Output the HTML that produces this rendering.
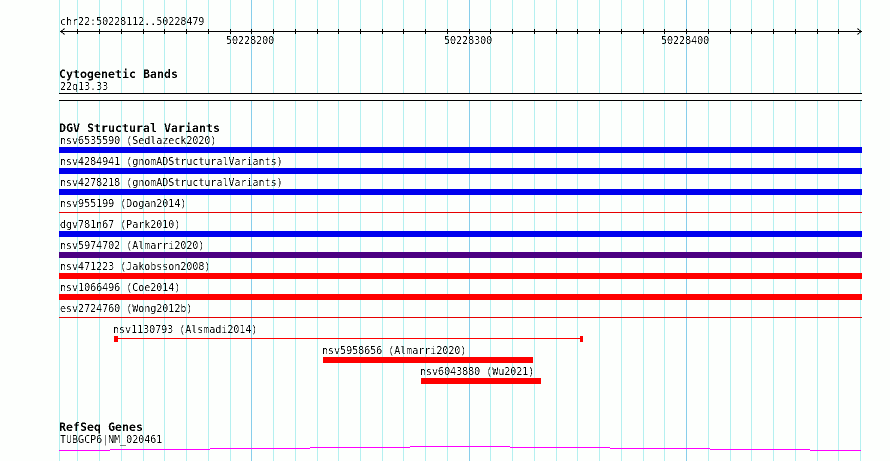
<!DOCTYPE html>
<html><head><meta charset="utf-8"><style>
html,body{margin:0;padding:0;background:#fdfffd;width:890px;height:461px;overflow:hidden}
svg{display:block;position:absolute;left:0;top:0}
text{font-family:"DejaVu Sans Mono","Liberation Mono",monospace;font-size:11px;fill:#000;white-space:pre}
text.b{font-weight:bold;font-size:11.63px}
</style></head><body>
<svg width="890" height="461" viewBox="0 0 890 461" shape-rendering="crispEdges">
<defs><filter id="th" x="0" y="0" width="890" height="461" filterUnits="userSpaceOnUse" color-interpolation-filters="sRGB"><feComponentTransfer><feFuncA type="discrete" tableValues="0 0 0 1 1"/></feComponentTransfer></filter></defs>
<g id="g" stroke="#b4f0f0" stroke-width="1">
<path d="M59.5 0V461M77.5 0V461M99.5 0V461M121.5 0V461M143.5 0V461M164.5 0V461M186.5 0V461M208.5 0V461M230.5 0V461M273.5 0V461M295.5 0V461M317.5 0V461M338.5 0V461M360.5 0V461M382.5 0V461M403.5 0V461M425.5 0V461M447.5 0V461M490.5 0V461M512.5 0V461M534.5 0V461M556.5 0V461M577.5 0V461M599.5 0V461M621.5 0V461M643.5 0V461M664.5 0V461M708.5 0V461M730.5 0V461M751.5 0V461M773.5 0V461M795.5 0V461M817.5 0V461M838.5 0V461M860.5 0V461"/>
<path stroke="#87ceeb" d="M251.5 0V461M469.5 0V461M686.5 0V461"/>
</g>
<rect x="59" y="93" width="803" height="8" fill="#fdfffd"/>
<!-- axis -->
<g stroke="#000" fill="none">
<path d="M60 31.5H862"/>
<path d="M77.5 29V34M99.5 29V34M121.5 29V34M143.5 29V34M164.5 29V34M186.5 29V34M208.5 29V34M230.5 29V34M251.5 29V34M273.5 29V34M295.5 29V34M317.5 29V34M338.5 29V34M360.5 29V34M382.5 29V34M403.5 29V34M425.5 29V34M447.5 29V34M469.5 29V34M490.5 29V34M512.5 29V34M534.5 29V34M556.5 29V34M577.5 29V34M599.5 29V34M621.5 29V34M643.5 29V34M664.5 29V34M686.5 29V34M708.5 29V34M730.5 29V34M751.5 29V34M773.5 29V34M795.5 29V34M817.5 29V34M838.5 29V34"/>
<path d="M64.5 28.5L61 31.5L64.5 34.5M857.5 28.5L861 31.5L857.5 34.5"/>
<path d="M59 93.5H862M59 100.5H862"/>
</g>
<!-- bars -->
<g>
<rect x="59" y="147" width="803" height="6" fill="#0000ee"/>
<rect x="59" y="168" width="803" height="6" fill="#0000ee"/>
<rect x="59" y="189" width="803" height="6" fill="#0000ee"/>
<rect x="59" y="212" width="803" height="1" fill="#e60000"/>
<rect x="59" y="231" width="803" height="6" fill="#0000ee"/>
<rect x="59" y="252" width="803" height="6" fill="#4b0082"/>
<rect x="59" y="273" width="803" height="6" fill="#ff0000"/>
<rect x="59" y="294" width="803" height="6" fill="#ff0000"/>
<rect x="59" y="317" width="803" height="1" fill="#e60000"/>
<rect x="114" y="338" width="468" height="1" fill="#ff0000"/>
<rect x="114" y="336" width="4" height="6" fill="#ff0000"/>
<rect x="580" y="336" width="3" height="6" fill="#ff0000"/>
<rect x="323" y="357" width="210" height="6" fill="#ff0000"/>
<rect x="421" y="378" width="120" height="6" fill="#ff0000"/>
</g>
<!-- gene -->
<path fill="none" stroke="#ff00ff" d="M59 450.5H110M110 449.5H210M210 448.5H310M310 447.5H410M410 446.5H510M510 447.5H610M610 448.5H710M710 449.5H810M810 450.5H861"/>
<g shape-rendering="auto" filter="url(#th)">
<text transform="translate(60 25) scale(.91 1)">chr22:50228112..50228479</text>
<text transform="translate(226 44) scale(.91 1)">50228200</text>
<text transform="translate(444 44) scale(.91 1)">50228300</text>
<text transform="translate(661 44) scale(.91 1)">50228400</text>
<text class="b" x="59" y="78">Cytogenetic Bands</text>
<text transform="translate(60 90) scale(.91 1)">22q13.33</text>
<text class="b" x="59" y="132">DGV Structural Variants</text>
<text transform="translate(60 144) scale(.91 1)">nsv6535590 (Sedlazeck2020)</text>
<text transform="translate(60 165) scale(.91 1)">nsv4284941 (gnomADStructuralVariants)</text>
<text transform="translate(60 186) scale(.91 1)">nsv4278218 (gnomADStructuralVariants)</text>
<text transform="translate(60 207) scale(.91 1)">nsv955199 (Dogan2014)</text>
<text transform="translate(60 228) scale(.91 1)">dgv781n67 (Park2010)</text>
<text transform="translate(60 249) scale(.91 1)">nsv5974702 (Almarri2020)</text>
<text transform="translate(60 270) scale(.91 1)">nsv471223 (Jakobsson2008)</text>
<text transform="translate(60 291) scale(.91 1)">nsv1066496 (Coe2014)</text>
<text transform="translate(60 312) scale(.91 1)">esv2724760 (Wong2012b)</text>
<text transform="translate(113 333) scale(.91 1)">nsv1130793 (Alsmadi2014)</text>
<text transform="translate(322 354) scale(.91 1)">nsv5958656 (Almarri2020)</text>
<text transform="translate(420 375) scale(.91 1)">nsv6043880 (Wu2021)</text>
<text class="b" x="59" y="431">RefSeq Genes</text>
<text transform="translate(60 443) scale(.91 1)">TUBGCP6|NM_020461</text>
</g>
</svg>
</body></html>
